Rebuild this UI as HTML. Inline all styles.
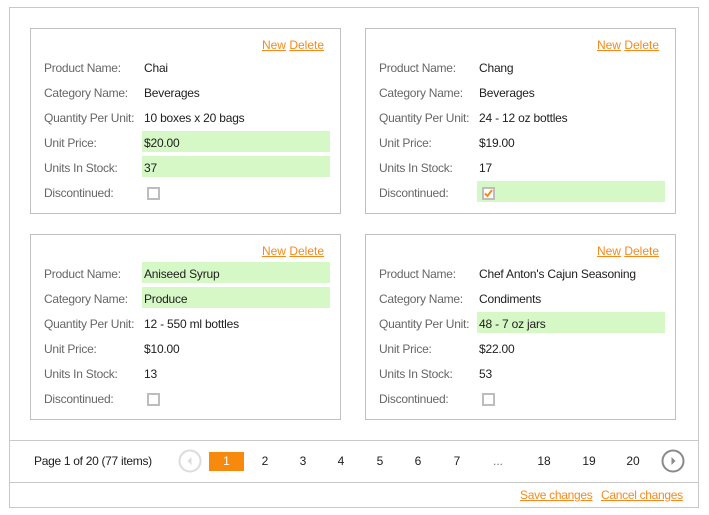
<!DOCTYPE html>
<html><head><meta charset="utf-8"><style>
*{margin:0;padding:0;box-sizing:border-box}
body{width:709px;height:515px;background:#fff;font-family:"Liberation Sans",sans-serif;font-size:12px;color:#202020;position:relative;overflow:hidden}
.a{position:absolute;white-space:nowrap}
.outer{position:absolute;left:9px;top:7px;width:690px;height:501px;border:1px solid #c8c8c8}
.card{position:absolute;width:311px;height:186px;border:1px solid #c0c0c0}
.lbl{position:absolute;left:13px;color:#666;letter-spacing:-0.25px;margin-top:-1px}
.val{position:absolute;left:113px;letter-spacing:-0.2px;margin-top:-1px}
.hl{position:absolute;left:111px;width:188px;height:21px;background:#d6f7c6}
.lnk{color:#f7891c;text-decoration:underline}
.cb{position:absolute;left:116px;width:13px;height:13px;border:2px solid #bdbdbd;background:#fff}
.links{position:absolute;right:16px;top:9px}
.pg{position:absolute;top:454px;width:20px;text-align:center}
</style></head><body>
<div class="outer"></div>

<div class="card" style="left:30px;top:28px">
<div class="links"><span class="lnk">New</span> <span class="lnk">Delete</span></div>
<div class="hl" style="top:102px"></div><div class="hl" style="top:127px"></div>
<div class="lbl" style="top:33px">Product Name:</div><div class="val" style="top:33px">Chai</div>
<div class="lbl" style="top:58px">Category Name:</div><div class="val" style="top:58px">Beverages</div>
<div class="lbl" style="top:83px">Quantity Per Unit:</div><div class="val" style="top:83px">10 boxes x 20 bags</div>
<div class="lbl" style="top:108px">Unit Price:</div><div class="val" style="top:108px">$20.00</div>
<div class="lbl" style="top:133px">Units In Stock:</div><div class="val" style="top:133px">37</div>
<div class="lbl" style="top:158px">Discontinued:</div><div class="cb" style="top:158px"></div>
</div>

<div class="card" style="left:365px;top:28px">
<div class="links"><span class="lnk">New</span> <span class="lnk">Delete</span></div>
<div class="hl" style="top:152px"></div>
<div class="lbl" style="top:33px">Product Name:</div><div class="val" style="top:33px">Chang</div>
<div class="lbl" style="top:58px">Category Name:</div><div class="val" style="top:58px">Beverages</div>
<div class="lbl" style="top:83px">Quantity Per Unit:</div><div class="val" style="top:83px">24 - 12 oz bottles</div>
<div class="lbl" style="top:108px">Unit Price:</div><div class="val" style="top:108px">$19.00</div>
<div class="lbl" style="top:133px">Units In Stock:</div><div class="val" style="top:133px">17</div>
<div class="lbl" style="top:158px">Discontinued:</div><div class="cb" style="top:158px"><svg width="9" height="9" viewBox="0 0 9 9" style="position:absolute;left:0;top:0"><path d="M1 4.5L3.5 7L8 1" stroke="#f7891c" stroke-width="2" fill="none"/></svg></div>
</div>

<div class="card" style="left:30px;top:234px">
<div class="links"><span class="lnk">New</span> <span class="lnk">Delete</span></div>
<div class="hl" style="top:27px"></div><div class="hl" style="top:52px"></div>
<div class="lbl" style="top:33px">Product Name:</div><div class="val" style="top:33px">Aniseed Syrup</div>
<div class="lbl" style="top:58px">Category Name:</div><div class="val" style="top:58px">Produce</div>
<div class="lbl" style="top:83px">Quantity Per Unit:</div><div class="val" style="top:83px">12 - 550 ml bottles</div>
<div class="lbl" style="top:108px">Unit Price:</div><div class="val" style="top:108px">$10.00</div>
<div class="lbl" style="top:133px">Units In Stock:</div><div class="val" style="top:133px">13</div>
<div class="lbl" style="top:158px">Discontinued:</div><div class="cb" style="top:158px"></div>
</div>

<div class="card" style="left:365px;top:234px">
<div class="links"><span class="lnk">New</span> <span class="lnk">Delete</span></div>
<div class="hl" style="top:77px"></div>
<div class="lbl" style="top:33px">Product Name:</div><div class="val" style="top:33px">Chef Anton's Cajun Seasoning</div>
<div class="lbl" style="top:58px">Category Name:</div><div class="val" style="top:58px">Condiments</div>
<div class="lbl" style="top:83px">Quantity Per Unit:</div><div class="val" style="top:83px">48 - 7 oz jars</div>
<div class="lbl" style="top:108px">Unit Price:</div><div class="val" style="top:108px">$22.00</div>
<div class="lbl" style="top:133px">Units In Stock:</div><div class="val" style="top:133px">53</div>
<div class="lbl" style="top:158px">Discontinued:</div><div class="cb" style="top:158px"></div>
</div>

<div class="a" style="left:9px;top:440px;width:690px;height:1px;background:#c8c8c8"></div>
<div class="a" style="left:9px;top:482px;width:690px;height:1px;background:#c8c8c8"></div>
<div class="a" style="left:34px;top:454px;letter-spacing:-0.3px">Page 1 of 20 (77 items)</div>
<svg class="a" style="left:178px;top:449px" width="24" height="24" viewBox="0 0 24 24"><circle cx="12" cy="12" r="10.5" fill="none" stroke="#dcdcdc" stroke-width="2"/><path d="M13.5 8L9.5 12L13.5 16Z" fill="#dcdcdc"/></svg>
<div class="a" style="left:209px;top:452px;width:35px;height:19px;background:#f7890c;color:#fff;text-align:center;line-height:19px">1</div>
<div class="pg" style="left:255px">2</div>
<div class="pg" style="left:293px">3</div>
<div class="pg" style="left:331px">4</div>
<div class="pg" style="left:370px">5</div>
<div class="pg" style="left:408px">6</div>
<div class="pg" style="left:447px">7</div>
<div class="pg" style="left:488px;color:#777">...</div>
<div class="pg" style="left:534px">18</div>
<div class="pg" style="left:579px">19</div>
<div class="pg" style="left:623px">20</div>
<svg class="a" style="left:661px;top:449px" width="24" height="24" viewBox="0 0 24 24"><circle cx="12" cy="12" r="10.5" fill="none" stroke="#8a8a8a" stroke-width="2"/><path d="M10.5 8L14.5 12L10.5 16Z" fill="#8a8a8a"/></svg>
<div class="a lnk" style="left:520px;top:488px;letter-spacing:-0.3px">Save changes</div>
<div class="a lnk" style="left:601px;top:488px;letter-spacing:-0.3px">Cancel changes</div>
</body></html>
